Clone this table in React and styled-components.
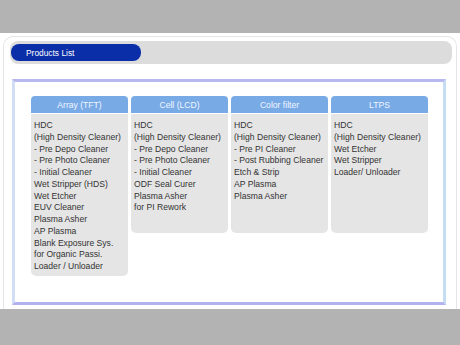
import React from "react";
import styled, { createGlobalStyle } from "styled-components";

const Global = createGlobalStyle`
  body {
    margin: 0;
    background: #b3b3b3;
    font-family: "Liberation Sans", Arial, sans-serif;
  }
`;

const Page = styled.div`
  margin-top: 33px;
  height: 276px;
  background: #ffffff;
  box-sizing: border-box;
  padding: 3px 3px 0 3px;
`;

const Panel = styled.div`
  height: 100%;
  box-sizing: border-box;
  border: 1px solid #e6e6e6;
  border-bottom: none;
  border-radius: 10px 10px 0 0;
  padding: 4px 4px 0 6px;
`;

const TitleBar = styled.div`
  height: 23px;
  background: #dcdcdc;
  border-radius: 8px;
  display: flex;
  align-items: center;
  padding-left: 1px;
`;

const Pill = styled.div`
  width: 130px;
  height: 17px;
  background: #0a2ea8;
  border-radius: 8px;
  color: #ffffff;
  font-size: 8.4px;
  display: flex;
  align-items: center;
  padding-left: 15px;
  box-sizing: border-box;
`;

const Frame = styled.div`
  margin: 15px 0 0 2px;
  width: 434px;
  height: 226px;
  box-sizing: border-box;
  border-top: 3px solid #b8b8f0;
  border-bottom: 3px solid #b2b2ee;
  border-left: 3px solid #d2dcf4;
  border-right: 3px solid #c6dcf2;
  padding: 14px 0 0 16px;
`;

const Grid = styled.div`
  display: grid;
  grid-template-columns: repeat(4, 97px);
  column-gap: 3px;
  align-items: start;
`;

const Column = styled.div`
  display: flex;
  flex-direction: column;
`;

const Head = styled.div`
  height: 17px;
  background: #78aae6;
  border-radius: 4px 4px 0 0;
  color: #f2f6ff;
  font-size: 8.6px;
  display: flex;
  align-items: center;
  justify-content: center;
  margin-bottom: 1px;
`;

const Body = styled.div`
  background: #e5e5e5;
  border-radius: 0 0 5px 5px;
  min-height: 119px;
  box-sizing: border-box;
  padding: 6px 0 3px 3px;
  color: #333333;
  font-size: 8.6px;
  line-height: 11.75px;
  white-space: nowrap;
`;

const columns = [
  {
    title: "Array (TFT)",
    items: [
      "HDC",
      "(High Density Cleaner)",
      "- Pre Depo Cleaner",
      "- Pre Photo Cleaner",
      "- Initial Cleaner",
      "Wet Stripper (HDS)",
      "Wet Etcher",
      "EUV Cleaner",
      "Plasma Asher",
      "AP Plasma",
      "Blank Exposure Sys.",
      "for Organic Passi.",
      "Loader / Unloader",
    ],
  },
  {
    title: "Cell (LCD)",
    items: [
      "HDC",
      "(High Density Cleaner)",
      "- Pre Depo Cleaner",
      "- Pre Photo Cleaner",
      "- Initial Cleaner",
      "ODF Seal Curer",
      "Plasma Asher",
      "for PI Rework",
    ],
  },
  {
    title: "Color filter",
    items: [
      "HDC",
      "(High Density Cleaner)",
      "- Pre PI Cleaner",
      "- Post Rubbing Cleaner",
      "Etch & Strip",
      "AP Plasma",
      "Plasma Asher",
    ],
  },
  {
    title: "LTPS",
    items: [
      "HDC",
      "(High Density Cleaner)",
      "Wet Etcher",
      "Wet Stripper",
      "Loader/ Unloader",
    ],
  },
];

function App() {
  return (
    <>
      <Global />
      <Page>
        <Panel>
          <TitleBar>
            <Pill>Products List</Pill>
          </TitleBar>
          <Frame>
            <Grid>
              {columns.map((c) => (
                <Column key={c.title}>
                  <Head>{c.title}</Head>
                  <Body>
                    {c.items.map((it, i) => (
                      <div key={i}>{it}</div>
                    ))}
                  </Body>
                </Column>
              ))}
            </Grid>
          </Frame>
        </Panel>
      </Page>
    </>
  );
}

export default App;
